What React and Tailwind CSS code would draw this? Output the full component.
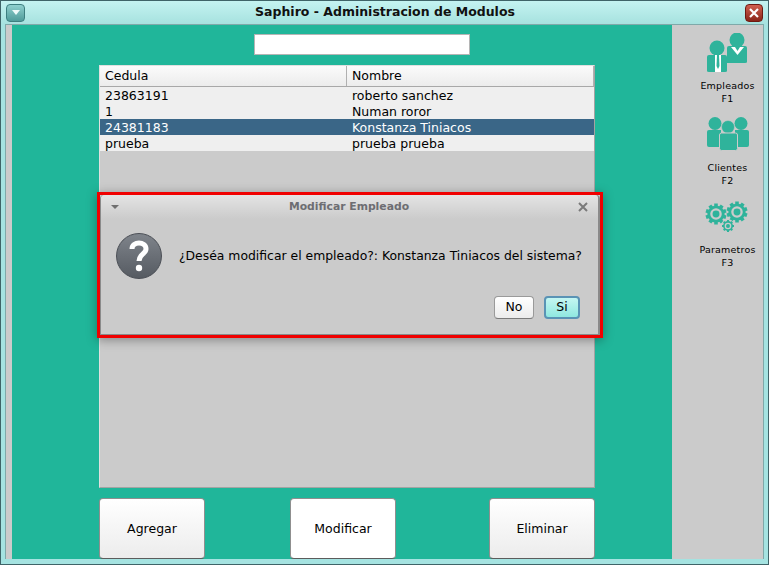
import React from "react";

const rows = [
  ["23863191", "roberto sanchez"],
  ["1", "Numan roror"],
  ["24381183", "Konstanza Tiniacos"],
  ["prueba", "prueba prueba"],
];

function EmpleadosIcon() {
  return (
    <svg width="42" height="40" viewBox="0 0 42 40" className="block">
      <circle cx="30" cy="7" r="7.500" fill="#2fb39b" />
      <path d="M20 15 Q20 13 22 13 L38 13 Q40 13 40 15 L40 29 Q40 30 38 30 L20 30 Z" fill="#2fb39b" />
      <path d="M24 14 L37 14 L30.500 22 Z" fill="#fff" />
      <path d="M28 14 L33 14 L30.500 18 Z" fill="#2fb39b" />
      <circle cx="10" cy="15" r="7.500" fill="#2fb39b" />
      <path d="M2 22 L18 22 Q20 22 20 24 L20 38 Q20 39 18 39 L2 39 Q0 39 0 38 L0 24 Q0 22 2 22 Z" fill="#2fb39b" />
      <path d="M8 22 L14 22 L14 39 L8 39 Z" fill="#fff" />
      <path d="M10 22 L12 22 L12.500 33 L11 36 L9.500 33 Z" fill="#2fb39b" />
    </svg>
  );
}

function ClientesIcon() {
  return (
    <svg width="44" height="34" viewBox="0 0 44 34" className="block">
      <circle cx="9" cy="6.500" r="6.500" fill="#2fb39b" />
      <circle cx="35" cy="6.500" r="6.500" fill="#2fb39b" />
      <path d="M3 13 L15 13 L15 30 L3 30 Q1 30 1 28 L1 15 Q1 13 3 13 Z" fill="#2fb39b" />
      <path d="M29 13 L41 13 Q43 13 43 15 L43 28 Q43 30 41 30 L29 30 Z" fill="#2fb39b" />
      <circle cx="22" cy="10" r="6.500" fill="#2fb39b" stroke="#cbcbcb" strokeWidth="0.500" />
      <rect x="13.500" y="16" width="18" height="17.500" rx="2" fill="#2fb39b" stroke="#cbcbcb" />
    </svg>
  );
}

function Gear({ cx, cy, r, teeth }) {
  const list = [];
  for (let i = 0; i < teeth; i++) {
    const a = (360 / teeth) * i;
    list.push(
      <rect
        key={i}
        x={cx - r * 0.17}
        y={cy - r}
        width={r * 0.34}
        height={r * 0.4}
        fill="#2fb39b"
        transform={`rotate(${a} ${cx} ${cy})`}
      />
    );
  }
  return (
    <g>
      {list}
      <circle cx={cx} cy={cy} r={r * 0.82} fill="#2fb39b" />
      <circle cx={cx} cy={cy} r={r * 0.55} fill="#cbcbcb" />
      <circle cx={cx} cy={cy} r={r * 0.33} fill="#2fb39b" />
    </g>
  );
}

function ParametrosIcon() {
  return (
    <svg width="44" height="32" viewBox="0 0 44 32" className="block">
      <Gear cx={11} cy={13} r={10.500} teeth={10} />
      <Gear cx={32} cy={11} r={10.500} teeth={10} />
      <circle cx={23} cy={25} r={6.800} fill="#cbcbcb" />
      <Gear cx={23} cy={25} r={6} teeth={8} />
    </svg>
  );
}

function SideItem({ icon, label, shortcut, iconClass }) {
  return (
    <div className="flex flex-col items-center h-[84px]">
      <div className={`flex items-start justify-center ${iconClass}`}>{icon}</div>
      <div className="text-[9.5px] leading-[13px] tracking-[0.2px] text-black text-center whitespace-nowrap">
        <div>{label}</div>
        <div>{shortcut}</div>
      </div>
    </div>
  );
}

function BigButton({ children, className }) {
  return (
    <button className={`w-[106px] h-[61px] pt-[1px] rounded-[4px] border border-[#8f8f8f] border-b-[#5c5c5c] text-[12.5px] text-black ${className}`}>
      {children}
    </button>
  );
}

export default function App() {
  return (
    <div className="relative w-[769px] h-[565px] overflow-hidden flex flex-col bg-[#a5e3e1] font-['DejaVu_Sans',sans-serif] border-x border-b border-[#3f6468]">
      {/* barra de titulo */}
      <div className="h-[24px] shrink-0 flex items-center px-[5px] bg-gradient-to-b from-[#c4f3f1] to-[#a6e2df] border-t border-[#3f6468] border-b-0 relative">
        <div className="w-[19px] h-[18px] rounded-[4px] border border-[#3d7f80] bg-gradient-to-b from-[#8fd0ce] to-[#4f9c9b] flex items-center justify-center">
          <div className="w-0 h-0 border-x-[4px] border-x-transparent border-t-[5px] border-t-[#eefafa]" />
        </div>
        <div className="flex-1 text-center text-[12.5px] font-bold text-[#111]">
          Saphiro - Administracion de Modulos
        </div>
        <div className="w-[18px] h-[18px] rounded-[4px] border border-[#6e1a12] bg-gradient-to-b from-[#d0604f] to-[#8a2418] flex items-center justify-center text-white">
          <svg width="10" height="10" viewBox="0 0 10 10">
            <path d="M1 1 L9 9 M9 1 L1 9" stroke="#fff" strokeWidth="2.200" />
          </svg>
        </div>
      </div>

      {/* cuerpo */}
      <div className="flex-1 flex mx-[4px] mb-[5px] border border-[#7fa9a9] border-b-0 bg-[#cbcbcb]">
        <div className="w-[6px] shrink-0" />
        <div className="w-[660px] shrink-0 bg-[#20b69a] pl-[87px] pr-[77px] pt-[9px] flex flex-col">
          <input
            readOnly
            className="ml-[155px] w-[216px] h-[21px] shrink-0 bg-white border border-[#b5b5b5] outline-none"
          />
          <div className="mt-[10px] h-[423px] shrink-0 bg-[#cbcbcb] border-r border-b border-[#a3a3a3] border-t border-l border-t-[#e0e0e0] border-l-[#e0e0e0]">
            <div className="flex h-[21px] bg-gradient-to-b from-[#fbfbfb] to-[#ececec] border-b border-[#a8a8a8] text-[12.5px] leading-[20px] text-black">
              <div className="w-[247px] pl-[5px] border-r border-[#b0b0b0]">Cedula</div>
              <div className="flex-1 pl-[5px] border-r border-[#b0b0b0]">Nombre</div>
            </div>
            {rows.map((r, i) => (
              <div
                key={r[0]}
                className={`flex h-[16px] text-[12.5px] leading-[18px] ${
                  i === 2 ? "bg-[#3a6687] text-white" : "bg-[#efefef] text-black"
                }`}
              >
                <div className="w-[247px] pl-[5px]">{r[0]}</div>
                <div className="flex-1 pl-[5px]">{r[1]}</div>
              </div>
            ))}
          </div>
          <div className="mt-[10px] flex">
            <BigButton className="bg-gradient-to-b from-[#ffffff] to-[#ececec]">Agregar</BigButton>
            <BigButton className="ml-[85px] bg-white">Modificar</BigButton>
            <BigButton className="ml-[93px] bg-gradient-to-b from-[#ffffff] to-[#ececec]">Eliminar</BigButton>
          </div>
        </div>
        <div className="flex-1 flex flex-col items-center pt-[8px] pl-[20px]">
          <SideItem icon={<EmpleadosIcon />} label="Empleados" shortcut="F1" iconClass="h-[46px]" />
          <SideItem icon={<ClientesIcon />} label="Clientes" shortcut="F2" iconClass="h-[44px]" />
          <SideItem icon={<ParametrosIcon />} label="Parametros" shortcut="F3" iconClass="h-[42px]" />
        </div>
      </div>

      {/* dialogo */}
      <div className="absolute left-[96px] top-[192px] w-[506px] h-[146px] border-[3px] border-[#f00000] shadow-[0_2px_10px_rgba(0,0,0,0.35)] bg-[#cbcbcb]">
        <div className="h-full border-r-2 border-l border-b border-[#8a8a8a] rounded-t-[4px] flex flex-col">
          <div className="h-[24px] shrink-0 flex items-center bg-gradient-to-b from-[#e4e4e4] to-[#cbcbcb] px-[10px] rounded-t-[4px]">
            <div className="w-0 h-0 border-x-[4px] border-x-transparent border-t-[4px] border-t-[#6f6f6f]" />
            <div className="flex-1 text-center text-[10.8px] font-bold text-[#6d6d72] pl-[1px]">Modificar Empleado</div>
            <svg width="10" height="10" viewBox="0 0 10 10">
              <path d="M1 1 L9 9 M9 1 L1 9" stroke="#7a7a7a" strokeWidth="2" />
            </svg>
          </div>
          <div className="flex items-center pl-[15px] mt-[14px]">
            <div className="w-[46px] h-[46px] rounded-full border border-[#4a4e55] bg-gradient-to-b from-[#7f848b] to-[#565b62] flex items-center justify-center">
              <svg width="20" height="32" viewBox="0 0 20 32">
                <path d="M3 9 C3 1 17 1 17 9 C17 14 10 14 10 21" fill="none" stroke="#fff" strokeWidth="5" />
                <circle cx="10" cy="28" r="3.200" fill="#fff" />
              </svg>
            </div>
            <div className="ml-[17px] text-[12.4px] text-black whitespace-nowrap">
              ¿Deséa modificar el empleado?: Konstanza Tiniacos del sistema?
            </div>
          </div>
          <div className="flex justify-end gap-[10px] pr-[18px] mt-[17px]">
            <button className="w-[40px] h-[23px] rounded-[4px] border border-[#9a9a9a] border-b-[#7a7a7a] bg-gradient-to-b from-[#ffffff] to-[#ececec] text-[12.5px] text-black">
              No
            </button>
            <button className="w-[36px] h-[23px] rounded-[4px] border-2 border-[#5a93b5] bg-gradient-to-b from-[#c4f6f2] to-[#8fe8e0] text-[12.5px] text-black">
              Si
            </button>
          </div>
        </div>
      </div>
    </div>
  );
}
